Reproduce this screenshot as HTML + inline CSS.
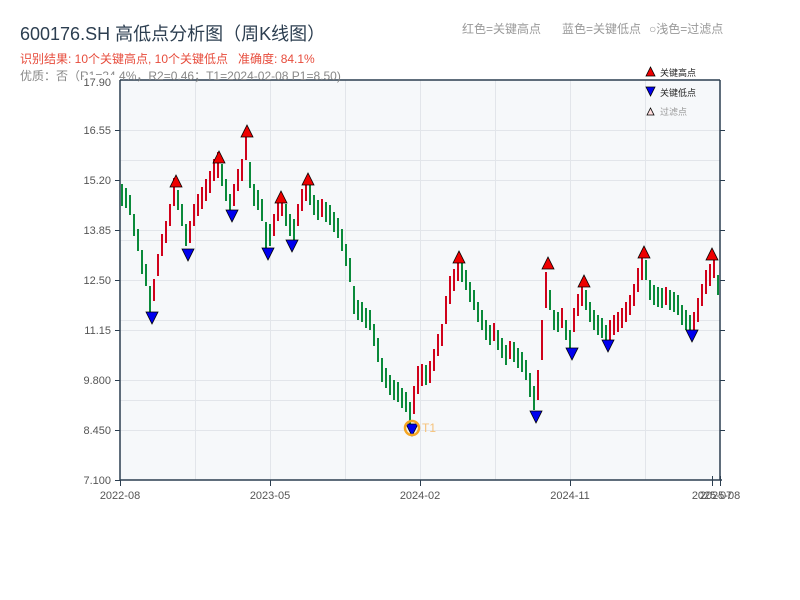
<!DOCTYPE html>
<html><head><meta charset="utf-8"><style>
body{margin:0;background:#fff;width:800px;height:600px;overflow:hidden;font-family:"Liberation Sans","Noto Sans CJK SC",sans-serif}
</style></head><body>
<svg width="800" height="600" xmlns="http://www.w3.org/2000/svg" style="position:absolute;left:0;top:0;font-family:'Liberation Sans','Noto Sans CJK SC',sans-serif">
<rect x="120" y="80" width="600" height="400" fill="#f6f8fa"/>
<g stroke="#e2e5ea" stroke-width="1">
<line x1="120" y1="130.5" x2="720" y2="130.5"/><line x1="120" y1="180.5" x2="720" y2="180.5"/><line x1="120" y1="230.5" x2="720" y2="230.5"/><line x1="120" y1="280.5" x2="720" y2="280.5"/><line x1="120" y1="330.5" x2="720" y2="330.5"/><line x1="120" y1="380.5" x2="720" y2="380.5"/><line x1="120" y1="430.5" x2="720" y2="430.5"/>
<line x1="120" y1="160.5" x2="720" y2="160.5"/><line x1="120" y1="240.5" x2="720" y2="240.5"/><line x1="120" y1="320.5" x2="720" y2="320.5"/><line x1="120" y1="400.5" x2="720" y2="400.5"/>
<line x1="195.5" y1="80" x2="195.5" y2="480"/><line x1="270.5" y1="80" x2="270.5" y2="480"/><line x1="345.5" y1="80" x2="345.5" y2="480"/><line x1="420.5" y1="80" x2="420.5" y2="480"/><line x1="495.5" y1="80" x2="495.5" y2="480"/><line x1="570.5" y1="80" x2="570.5" y2="480"/><line x1="645.5" y1="80" x2="645.5" y2="480"/>
</g>
<path stroke="#d0021b" stroke-width="2" fill="none" d="M154 279V301M158 254V276M162 234V256M166 221V243M170 204V226M174 178V206M190 221V243M194 204V226M198 194V216M202 187V209M206 179V201M210 171V193M214 159V181M218 152V178M234 184V206M238 169V191M242 159V181M246 132V160M274 214V236M278 199V221M282 194V216M298 204V226M302 189V211M306 179V201M322 199V217M414 386V414M418 366V394M422 364V386M430 361V383M434 349V371M438 334V356M442 324V346M446 296V324M450 276V304M454 269V291M458 259V281M494 323V341M510 341V359M538 370V400M542 320V360M546 272V308M562 308V328M574 308V332M578 294V316M582 284V306M610 320V340M614 315V335M618 312V332M622 308V328M626 302V322M630 295V315M634 284V306M638 268V292M642 256V280M666 287V305M694 312V332M698 298V322M702 284V306M706 270V294M710 264V286M714 258V278"/>
<path stroke="#0a8a3a" stroke-width="2" fill="none" d="M122 184V206M126 188V208M130 195V215M134 214V236M138 229V251M142 250V274M146 264V286M150 286V314M178 190V210M182 204V226M186 224V246M222 164V186M226 179V201M230 194V216M250 162V188M254 184V206M258 190V210M262 199V221M266 222V248M270 224V246M286 204V226M290 214V236M294 219V241M310 185V205M314 195V215M318 200V220M326 202V222M330 205V225M334 212V232M338 218V238M342 229V251M346 244V266M350 258V282M354 286V314M358 300V320M362 302V322M366 308V328M370 310V330M374 324V346M378 338V362M382 358V382M386 368V388M390 375V395M394 380V400M398 382V402M402 388V408M406 392V412M410 402V428M426 365V385M462 262V282M466 270V290M470 282V302M474 290V310M478 302V322M482 310V330M486 320V340M490 325V345M498 330V350M502 338V358M506 345V365M514 342V362M518 348V368M522 352V372M526 360V380M530 373V397M534 386V410M550 290V310M554 310V330M558 312V332M566 320V340M570 330V350M586 290V310M590 302V322M594 310V330M598 315V335M602 318V338M606 325V345M646 260V280M650 280V300M654 285V305M658 287V307M662 288V308M670 290V310M674 292V312M678 295V315M682 305V325M686 310V330M690 315V335M718 275V295"/>
<g stroke="#2c3e50" stroke-width="1.5" fill="none">
<line x1="120" y1="80" x2="120" y2="480"/><line x1="120" y1="480" x2="722" y2="480"/><line x1="720" y1="80" x2="720" y2="480"/><line x1="120" y1="80" x2="720" y2="80"/>
</g>
<g stroke="#2c3e50" stroke-width="1">
<line x1="115" y1="130.5" x2="120" y2="130.5"/><line x1="115" y1="180.5" x2="120" y2="180.5"/><line x1="115" y1="230.5" x2="120" y2="230.5"/><line x1="115" y1="280.5" x2="120" y2="280.5"/><line x1="115" y1="330.5" x2="120" y2="330.5"/><line x1="115" y1="380.5" x2="120" y2="380.5"/><line x1="115" y1="430.5" x2="120" y2="430.5"/><line x1="115" y1="480.5" x2="120" y2="480.5"/>
<line x1="720" y1="130.5" x2="725" y2="130.5"/><line x1="720" y1="180.5" x2="725" y2="180.5"/><line x1="720" y1="230.5" x2="725" y2="230.5"/><line x1="720" y1="280.5" x2="725" y2="280.5"/><line x1="720" y1="330.5" x2="725" y2="330.5"/><line x1="720" y1="380.5" x2="725" y2="380.5"/><line x1="720" y1="430.5" x2="725" y2="430.5"/>
<line x1="120.5" y1="480" x2="120.5" y2="486"/><line x1="270.5" y1="480" x2="270.5" y2="486"/><line x1="420.5" y1="480" x2="420.5" y2="486"/><line x1="570.5" y1="480" x2="570.5" y2="486"/><line x1="712.5" y1="476" x2="712.5" y2="486"/><line x1="720.5" y1="476" x2="720.5" y2="486"/>
</g>
<g font-size="11" fill="#555" text-anchor="end">
<text x="111" y="134">16.55</text><text x="111" y="184">15.20</text><text x="111" y="234">13.85</text><text x="111" y="284">12.50</text><text x="111" y="334">11.15</text><text x="111" y="384">9.800</text><text x="111" y="434">8.450</text><text x="111" y="484">7.100</text>
</g>
<g font-size="11" fill="#555" text-anchor="middle">
<text x="120" y="499">2022-08</text><text x="270" y="499">2023-05</text><text x="420" y="499">2024-02</text><text x="570" y="499">2024-11</text><text x="712" y="499">2025-07</text><text x="720" y="499">2025-08</text>
</g>
<g stroke="#000" stroke-width="0.8">
<path fill="#e00" d="M170 187L176 175L182 187ZM213 163L219 151L225 163ZM241 137L247 125L253 137ZM275 203L281 191L287 203ZM302 185L308 173L314 185ZM453 263L459 251L465 263ZM542 269L548 257L554 269ZM578 287L584 275L590 287ZM638 258L644 246L650 258ZM706 260L712 248L718 260Z"/>
<path fill="#00e" d="M146 312L152 324L158 312ZM182 249L188 261L194 249ZM226 210L232 222L238 210ZM262 248L268 260L274 248ZM286 240L292 252L298 240ZM406 424L412 436L418 424ZM530 411L536 423L542 411ZM566 348L572 360L578 348ZM602 340L608 352L614 340ZM686 330L692 342L698 330Z"/>
</g>
<circle cx="412" cy="428" r="7" fill="none" stroke="#f5a623" stroke-width="2.5"/>
<text x="422" y="432" font-size="12" fill="#f5c27a">T1</text>
<text x="20" y="40" font-size="18" fill="#2c3e50">600176.SH 高低点分析图（周K线图）</text>
<text x="20" y="63" font-size="12" fill="#e74c3c">识别结果: 10个关键高点, 10个关键低点&#160;&#160;&#160;准确度: 84.1%</text>
<text x="20" y="80" font-size="12" fill="#888">优质：否（R1=34.4%，R2=0.46；T1=2024-02-08 P1=8.50)</text>
<rect x="84" y="75" width="34" height="13" fill="#fff"/>
<text x="111" y="86" font-size="11" fill="#555" text-anchor="end">17.90</text>
<text x="462" y="33" font-size="12" fill="#999">红色=关键高点</text>
<text x="562" y="33" font-size="12" fill="#999">蓝色=关键低点</text>
<text x="649" y="33" font-size="12" fill="#999">○浅色=过滤点</text>
<path d="M646,76 L650.5,67 L655,76Z" fill="#e00" stroke="#000" stroke-width="0.8"/>
<text x="660" y="76" font-size="9" fill="#222">关键高点</text>
<path d="M646,87 L650.5,96 L655,87Z" fill="#00e" stroke="#000" stroke-width="0.8"/>
<text x="660" y="96" font-size="9" fill="#222">关键低点</text>
<path d="M647,115 L650.5,108 L654,115Z" fill="#fdd" stroke="#000" stroke-width="0.8"/>
<text x="660" y="115" font-size="9" fill="#999">过滤点</text>
</svg>
</body></html>
